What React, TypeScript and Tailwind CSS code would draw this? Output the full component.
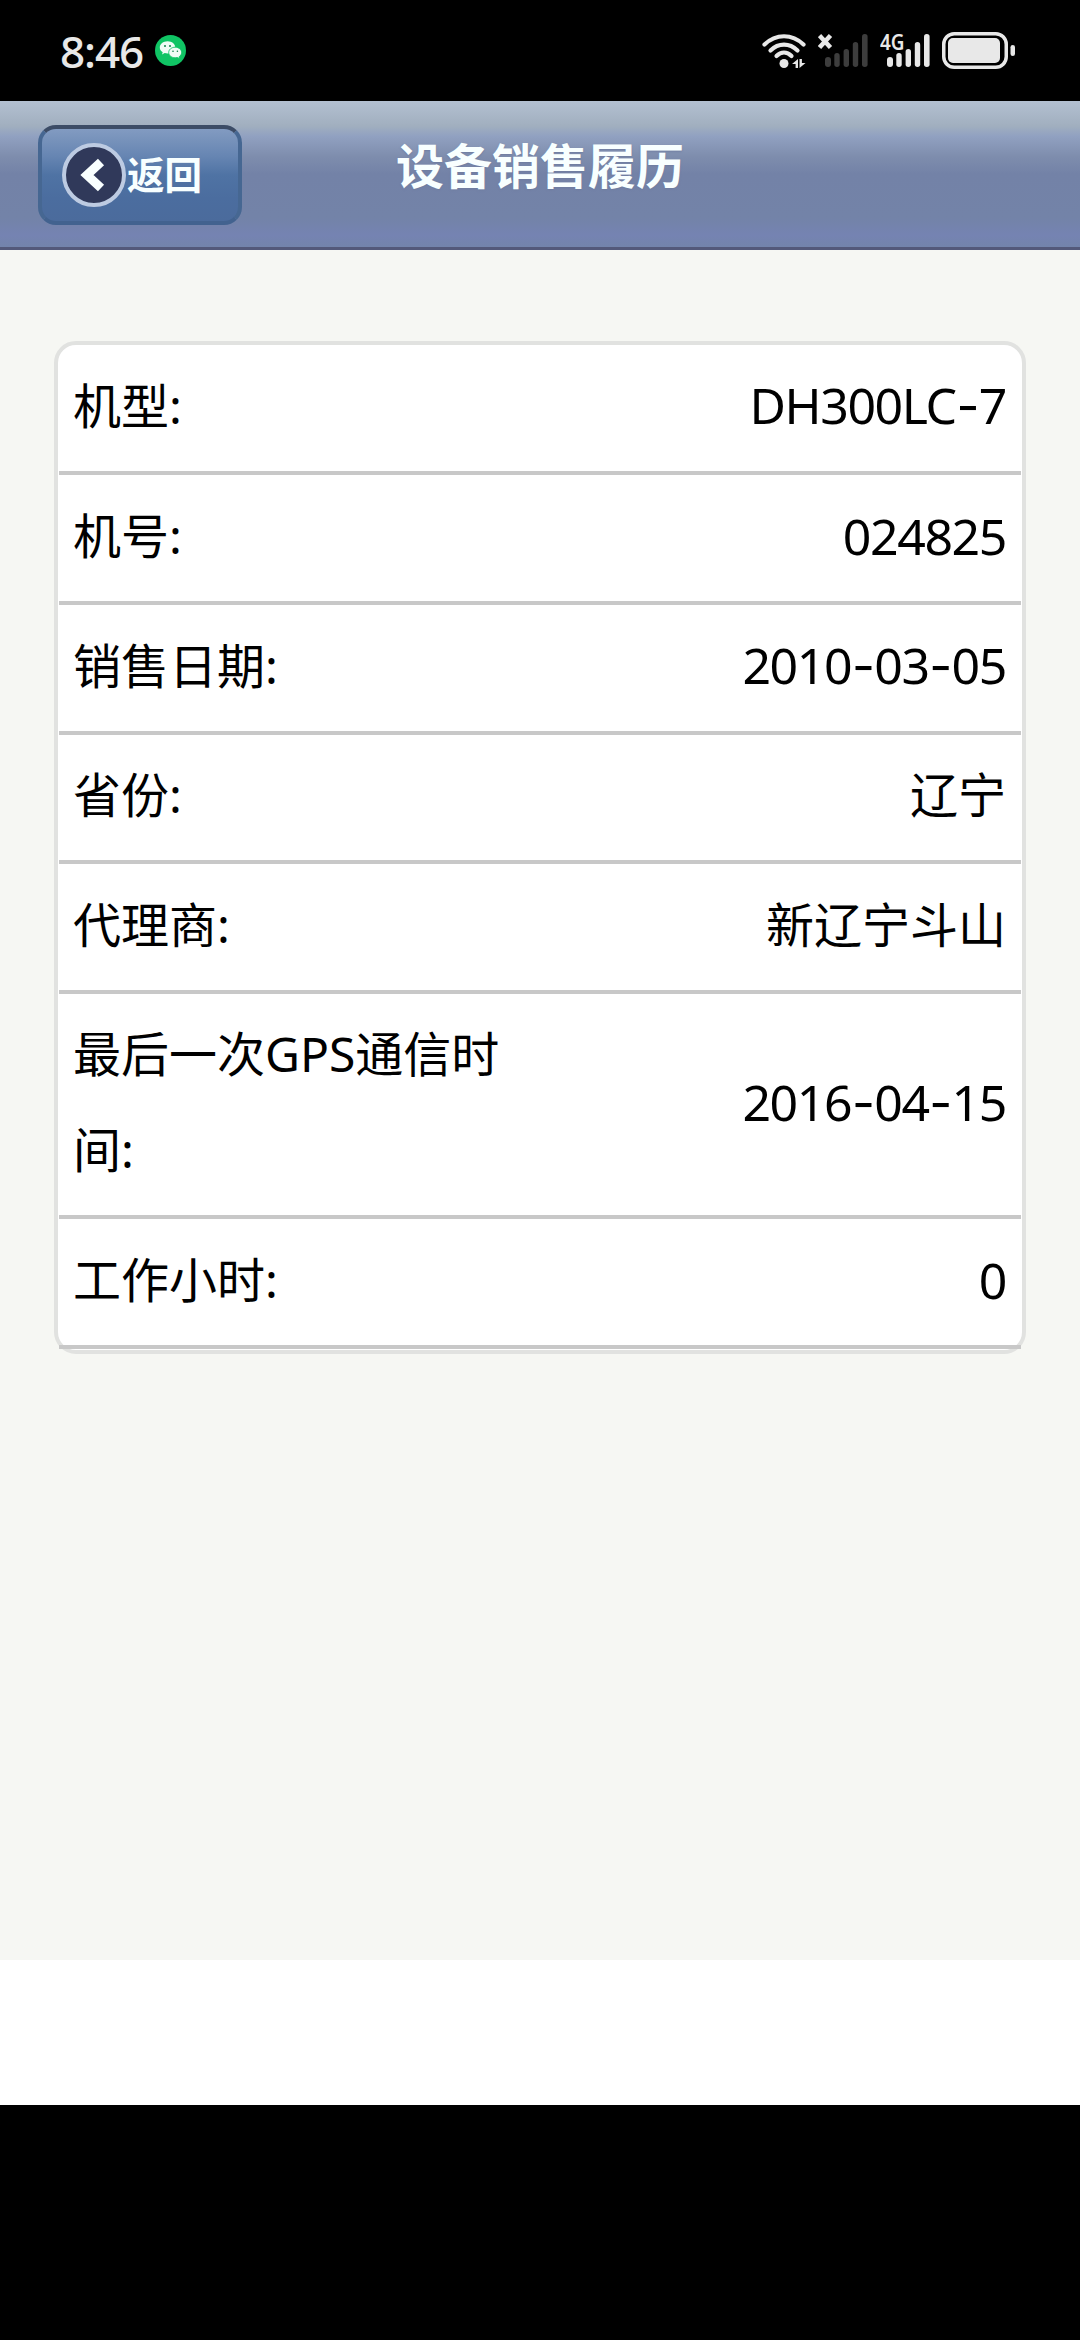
interface RecordRow {
  label: string;
  value: string;
  height: string;
}

const rows: RecordRow[] = [
  { label: '机型:', value: 'DH300LC-7', height: 'h-[130px]' },
  { label: '机号:', value: '024825', height: 'h-[130px]' },
  { label: '销售日期:', value: '2010-03-05', height: 'h-[130px]' },
  { label: '省份:', value: '辽宁', height: 'h-[129px]' },
  { label: '代理商:', value: '新辽宁斗山', height: 'h-[130px]' },
  { label: '最后一次GPS通信时间:', value: '2016-04-15', height: 'h-[225px]' },
  { label: '工作小时:', value: '0', height: 'h-[130px]' },
];

function WeChatIcon() {
  return (
    <svg className="w-[31px] h-[31px] ml-[12px]" viewBox="0 0 31 31">
      <circle cx="15.5" cy="15.5" r="15.5" fill="#10c464" />
      <path
        d="M12.6 6.2c-4.4 0-7.8 2.8-7.8 6.2 0 2 1.1 3.7 2.9 4.8l-.7 2.3 2.7-1.4c.9.3 1.9.4 2.9.4 4.3 0 7.7-2.8 7.7-6.1 0-3.4-3.4-6.2-7.7-6.2z"
        fill="#f2fbf6"
      />
      <path
        d="M20.2 12.2c-3.7 0-6.5 2.4-6.5 5.3s2.8 5.3 6.5 5.3c.8 0 1.6-.1 2.3-.3l2.3 1.2-.6-2c1.5-1 2.4-2.5 2.4-4.2 0-2.9-2.8-5.3-6.4-5.3z"
        fill="#f2fbf6"
        stroke="#10c464"
        strokeWidth="0.9"
      />
      <circle cx="10" cy="11" r="1" fill="#10804a" />
      <circle cx="15" cy="11" r="1" fill="#10804a" />
      <circle cx="18" cy="16.2" r="0.8" fill="#10804a" />
      <circle cx="22.4" cy="16.2" r="0.8" fill="#10804a" />
    </svg>
  );
}

function WifiIcon() {
  return (
    <svg className="w-[44px] h-[36px]" viewBox="0 0 44 36">
      <g fill="none" stroke="#e8e8e8" strokeWidth="4.2" strokeLinecap="round">
        <path d="M2.5 11.5C14 .5 30 .5 41.5 11.5" />
        <path d="M8.5 17.5C16.5 9.7 27.5 9.7 35.5 17.5" />
        <path d="M14.5 23C19 18.5 25 18.5 29.5 23" />
      </g>
      <circle cx="22" cy="30.5" r="4.5" fill="#e8e8e8" />
      <path d="M36 26v9h-2.400v-4H30zM37.500 26h2.400v4H43.500l-6 5z" fill="#e8e8e8" />
    </svg>
  );
}

function SignalBars({ color }: { color: string }) {
  return (
    <g fill={color}>
      <rect x="7" y="24" width="6" height="10" rx="3" />
      <rect x="16.3" y="20" width="5.4" height="14" rx="2.7" />
      <rect x="25.6" y="16" width="5.4" height="18" rx="2.7" />
      <rect x="34.8" y="9" width="5.4" height="25" rx="2.7" />
      <rect x="44" y="1" width="5.6" height="33" rx="2.7" />
    </g>
  );
}

function StatusBar() {
  return (
    <div className="h-[101px] bg-black flex items-center justify-between pl-[60px] pr-[65px]">
      <div className="flex items-center">
        <span className="font-['Noto_Sans',sans-serif] text-[44px] leading-[50px] tracking-[-1.1px] font-medium text-[#e8e8e8]">
          8:46
        </span>
        <WeChatIcon />
      </div>
      <div className="flex items-center">
        <WifiIcon />
        {/* SIM 1, no service */}
        <svg className="w-[50px] h-[35px] ml-[12px]" viewBox="0 0 50 35">
          <SignalBars color="#3d3d3d" />
          <path d="M1.500 2.500l11 12M12.500 2.500l-11 12" stroke="#e8e8e8" strokeWidth="4.5" />
        </svg>
        {/* SIM 2 */}
        <svg className="w-[50px] h-[59px] ml-[12px]" viewBox="0 -12 50 59">
          <SignalBars color="#e8e8e8" />
          <text
            x="0"
            y="17"
            textLength="24.5"
            lengthAdjust="spacingAndGlyphs"
            className="font-['Noto_Sans',sans-serif] text-[22px] font-semibold"
            fill="#e8e8e8"
          >
            4G
          </text>
        </svg>
        <svg className="w-[73px] h-[38px] ml-[12px]" viewBox="0 0 73 38">
          <rect x="1.75" y="1.75" width="62.5" height="33.5" rx="10.5" fill="none" stroke="#e8e8e8" strokeWidth="3.5" />
          <rect x="6" y="6" width="52" height="25" rx="5" fill="#e8e8e8" />
          <rect x="68.5" y="13" width="4.5" height="11" rx="2.25" fill="#e8e8e8" />
        </svg>
      </div>
    </div>
  );
}

function Header() {
  return (
    <header className="h-[149px] border-b-[3px] border-[#53597a] bg-[linear-gradient(180deg,#b3c0d1_0%,#a1afbf_17%,#91a1c1_24%,#7e8dad_38%,#7382a7_50%,#7383a8_80%,#7583b2_92%,#7384ab_100%)] grid grid-cols-[340px_1fr_340px] items-start">
      <button className="ml-[38px] mt-[24px] w-[204px] h-[100px] rounded-[18px] border-4 border-t-[#3c4c66] border-x-[#466792] border-b-[#42628f] bg-[linear-gradient(180deg,#829bc1_0%,#6685b2_30%,#4f73a4_50%,#4b6d9f_75%,#4b6b9c_100%)] flex items-center pl-[20px]">
        <span className="w-[64px] h-[64px] shrink-0 rounded-full border-4 border-[#bdcbe2] bg-[#30395a] flex items-center justify-center">
          <svg className="w-[32px] h-[36px] -ml-[4px]" viewBox="0 0 32 36">
            <path d="M25 5L11 18l14 13" fill="none" stroke="#f8ffff" strokeWidth="9" strokeLinejoin="miter" />
          </svg>
        </span>
        <span className="ml-[1px] text-[37.5px] leading-[50px] font-bold text-[#f8ffff] whitespace-nowrap">返回</span>
      </button>
      <h1 className="mt-[30px] text-center text-[48px] leading-[70px] font-bold text-[#f8ffff] [text-shadow:0_1px_2px_#6f7c9f]">
        设备销售履历
      </h1>
    </header>
  );
}

// Codes and dates run a bit larger and tighter than Chinese text, with wide hyphens
function Value({ text }: { text: string }) {
  if (!/\d/.test(text)) {
    return <span className="whitespace-nowrap">{text}</span>;
  }
  return (
    <span className="whitespace-nowrap text-[50px] tracking-[-1.4px]">
      {text.split('-').map((part, i) => (
        <span key={i}>
          {i > 0 && <span className="inline-block w-[23px] text-center font-['Inter',sans-serif]">-</span>}
          {part}
        </span>
      ))}
    </span>
  );
}

export default function App() {
  return (
    <div className="w-[1080px] h-[2340px] bg-black flex flex-col font-['Noto_Sans','Noto_Sans_CJK_SC',sans-serif] text-black overflow-hidden">
      <StatusBar />
      <Header />
      <main className="h-[1710px] bg-[#f6f7f3] px-[54px] pt-[91px]">
        <div className="h-[1013px] rounded-[22px] border-4 border-[#e1e2e0] bg-white px-px">
          {rows.map((row) => (
            <div
              key={row.label}
              className={`${row.height} border-b-4 border-[#c8c8c8] flex items-center justify-between pl-[14px] pr-[15px] pb-[5px] text-[48px] leading-[96px]`}
            >
              <span className="w-[450px] break-all">{row.label}</span>
              <Value text={row.value} />
            </div>
          ))}
        </div>
      </main>
      <div className="h-[145px] bg-white" />
    </div>
  );
}
